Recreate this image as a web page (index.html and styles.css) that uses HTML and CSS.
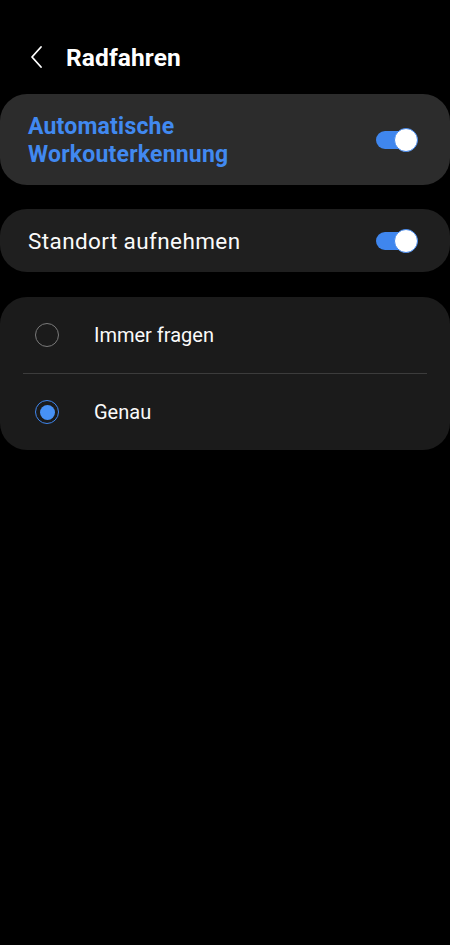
FILE: index.html
```html
<!DOCTYPE html>
<html lang="de">
<head>
<meta charset="utf-8">
<title>Radfahren</title>
<link rel="stylesheet" href="styles.css">
</head>
<body>
<div class="screen">
  <header class="header">
    <svg class="back" viewBox="0 0 14 24" width="14" height="24"><path d="M11 2 L2 12 L11 22" fill="none" stroke="#ffffff" stroke-width="1.8" stroke-linecap="round" stroke-linejoin="round"/></svg>
    <h1 class="title">Radfahren</h1>
  </header>

  <section class="card card-main">
    <div class="label-main">Automatische<br>Workouterkennung</div>
    <div class="switch"><span class="knob"></span></div>
  </section>

  <section class="card card-row">
    <div class="label">Standort aufnehmen</div>
    <div class="switch"><span class="knob"></span></div>
  </section>

  <section class="card card-list">
    <div class="option">
      <span class="radio"></span>
      <span class="label">Immer fragen</span>
    </div>
    <div class="divider"></div>
    <div class="option">
      <span class="radio checked"></span>
      <span class="label">Genau</span>
    </div>
  </section>
</div>
</body>
</html>
```
FILE: styles.css
```css
html, body {
  margin: 0;
  padding: 0;
  background: #000;
}
body {
  font-family: Roboto, "Noto Sans", sans-serif;
  color: #fafafa;
  width: 450px;
  height: 945px;
  overflow: hidden;
}
.screen {
  display: flex;
  flex-direction: column;
}
.header {
  display: flex;
  align-items: center;
  height: 40px;
  margin-top: 37px;
  padding-left: 30px;
  margin-bottom: 17px;
}
.back {
  display: block;
}
.title {
  margin: 0 0 0 22px;
  font-size: 24.5px;
  font-weight: 700;
  color: #fff;
  letter-spacing: 0.1px;
}
.card {
  border-radius: 27px;
  display: flex;
  align-items: center;
}
.card-main {
  background: #2c2c2c;
  height: 91px;
  padding: 0 32px 0 28px;
  justify-content: space-between;
}
.label-main {
  color: #4189f0;
  font-size: 23px;
  font-weight: 700;
  line-height: 28px;
  margin-top: 2px;
  letter-spacing: 0.2px;
}
.card-row {
  background: #1f1f1f;
  height: 63px;
  margin-top: 24px;
  padding: 0 32px 0 28px;
  justify-content: space-between;
}
.label {
  font-size: 22.5px;
  line-height: 28px;
  color: #fafafa;
  letter-spacing: 0.4px;
}
.switch {
  position: relative;
  width: 42px;
  height: 24px;
}
.switch::before {
  content: "";
  position: absolute;
  left: 0;
  top: 3px;
  width: 34px;
  height: 18px;
  border-radius: 9px;
  background: #3f86ee;
}
.knob {
  position: absolute;
  right: 0;
  top: 0;
  width: 22px;
  height: 22px;
  border-radius: 50%;
  background: #fff;
  border: 1px solid #3f86ee;
}
.card-list {
  background: #1b1b1b;
  margin-top: 25px;
  flex-direction: column;
  align-items: stretch;
}
.option {
  height: 76px;
  display: flex;
  align-items: center;
  padding-left: 35px;
}
.option .label {
  font-size: 20px;
  letter-spacing: 0;
  margin-left: 35px;
}
.radio {
  box-sizing: border-box;
  width: 24px;
  height: 24px;
  border-radius: 50%;
  border: 1.5px solid #7a7a7a;
  display: flex;
  align-items: center;
  justify-content: center;
}
.radio.checked {
  border-color: #3f86ee;
}
.radio.checked::after {
  content: "";
  width: 15px;
  height: 15px;
  border-radius: 50%;
  background: #4791f5;
}
.divider {
  height: 1px;
  background: #3c3c3c;
  margin: 0 23px;
}
```
